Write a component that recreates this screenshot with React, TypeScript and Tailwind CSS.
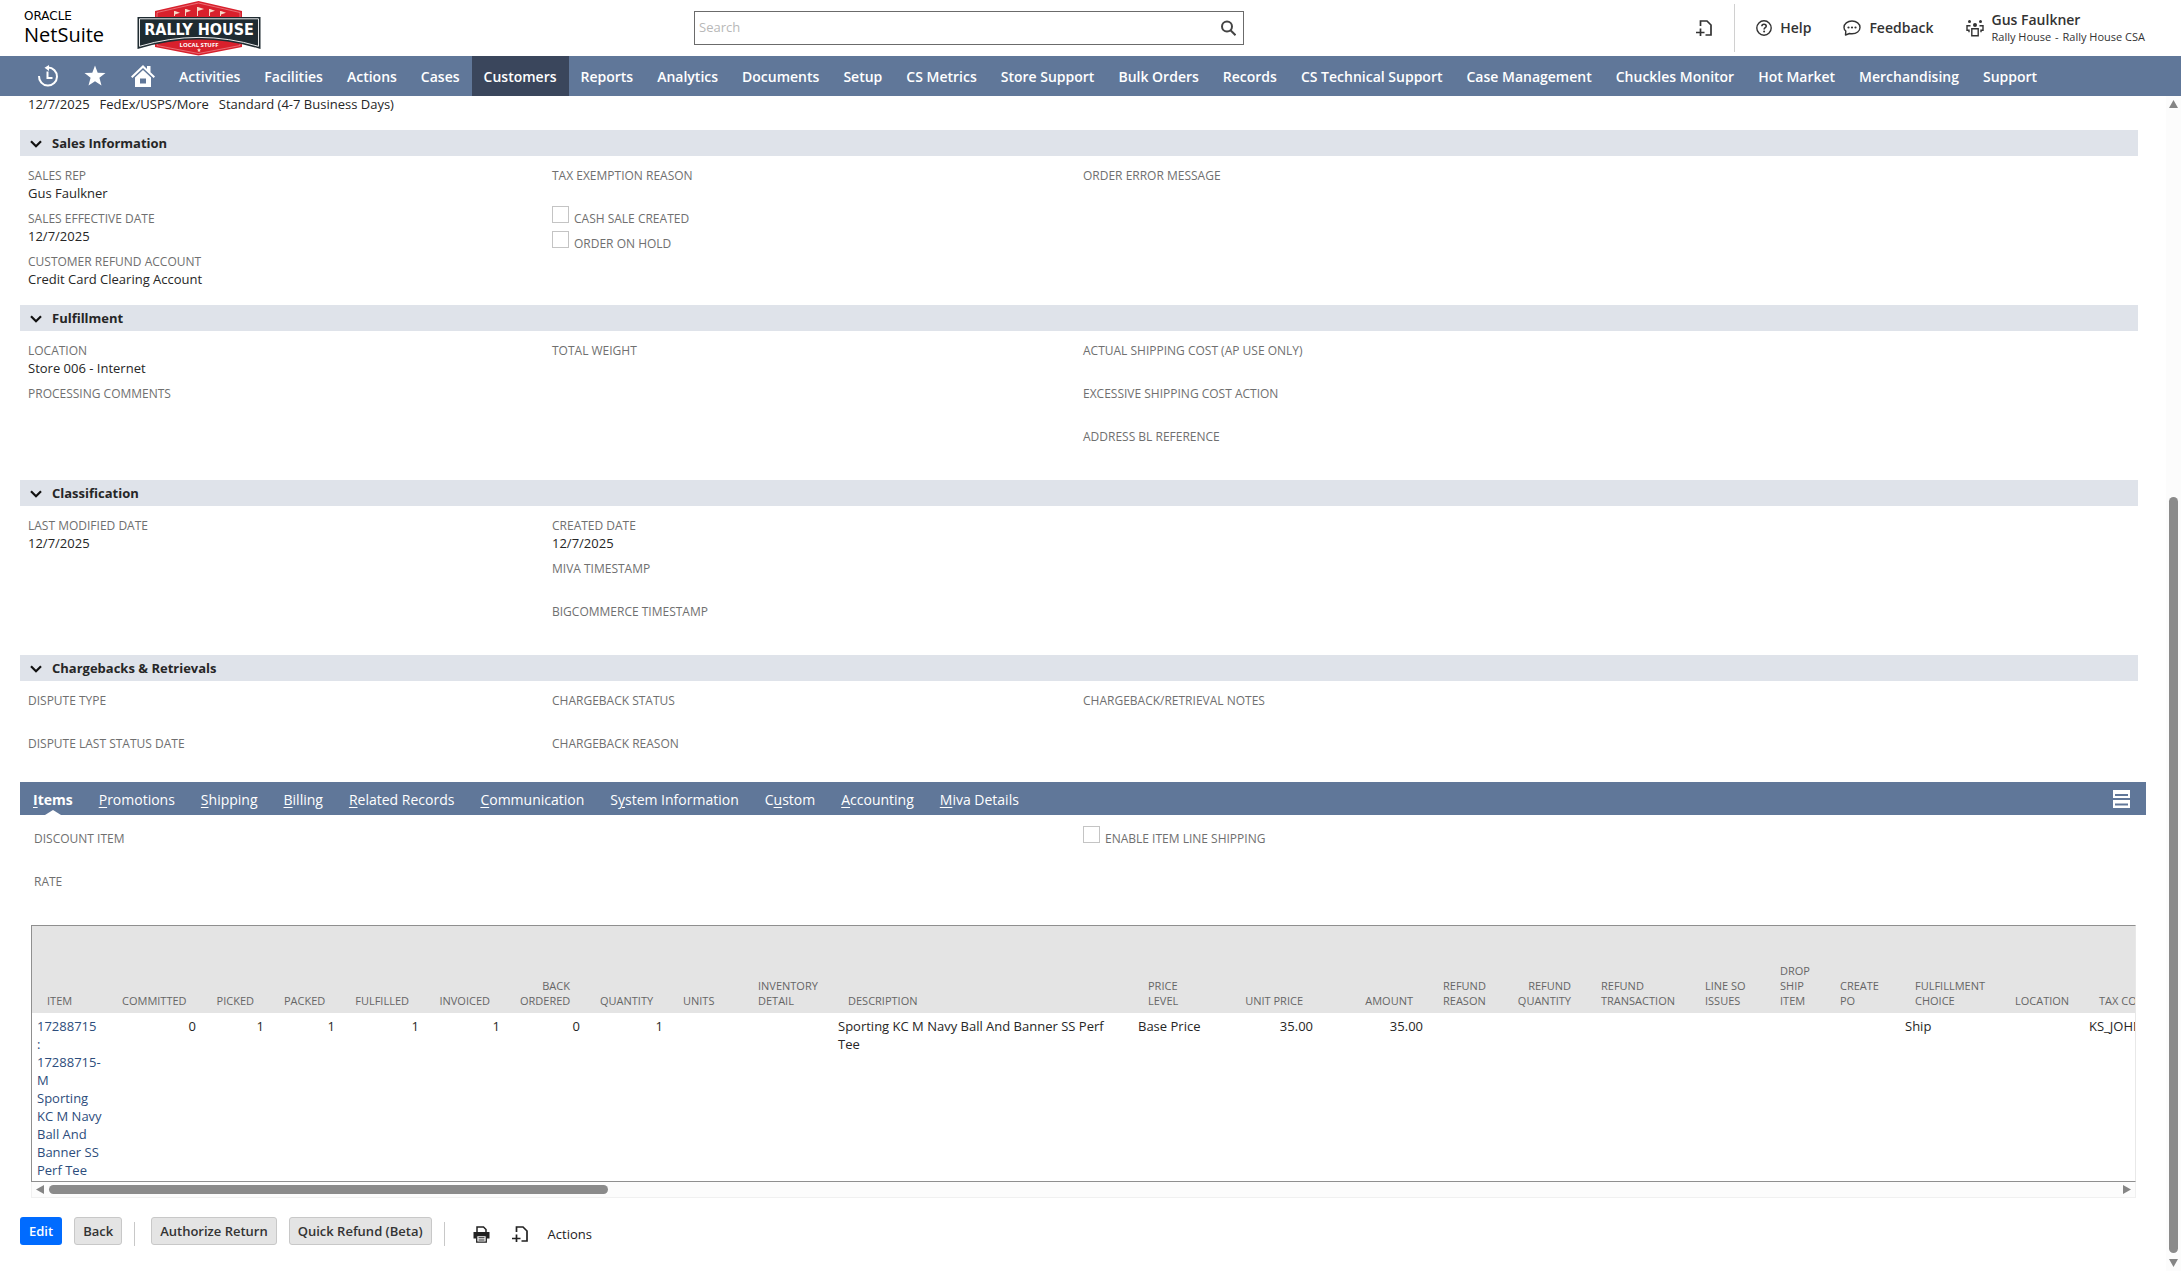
import { useState } from "react";
import type { ReactNode } from "react";

interface FieldData {
  label: string;
  value?: string;
}

interface SectionData {
  title: string;
  columns: FieldData[][];
  checks?: string[];
}

interface Column {
  header: string;
  width: string;
  value?: string;
  right?: boolean;
}

const menu = [
  "Activities",
  "Facilities",
  "Actions",
  "Cases",
  "Customers",
  "Reports",
  "Analytics",
  "Documents",
  "Setup",
  "CS Metrics",
  "Store Support",
  "Bulk Orders",
  "Records",
  "CS Technical Support",
  "Case Management",
  "Chuckles Monitor",
  "Hot Market",
  "Merchandising",
  "Support",
];

const sections: SectionData[] = [
  {
    title: "Sales Information",
    columns: [
      [
        { label: "SALES REP", value: "Gus Faulkner" },
        { label: "SALES EFFECTIVE DATE", value: "12/7/2025" },
        { label: "CUSTOMER REFUND ACCOUNT", value: "Credit Card Clearing Account" },
      ],
      [{ label: "TAX EXEMPTION REASON" }],
      [{ label: "ORDER ERROR MESSAGE" }],
    ],
    checks: ["CASH SALE CREATED", "ORDER ON HOLD"],
  },
  {
    title: "Fulfillment",
    columns: [
      [{ label: "LOCATION", value: "Store 006 - Internet" }, { label: "PROCESSING COMMENTS" }],
      [{ label: "TOTAL WEIGHT" }],
      [
        { label: "ACTUAL SHIPPING COST (AP USE ONLY)" },
        { label: "EXCESSIVE SHIPPING COST ACTION" },
        { label: "ADDRESS BL REFERENCE" },
      ],
    ],
  },
  {
    title: "Classification",
    columns: [
      [{ label: "LAST MODIFIED DATE", value: "12/7/2025" }],
      [
        { label: "CREATED DATE", value: "12/7/2025" },
        { label: "MIVA TIMESTAMP" },
        { label: "BIGCOMMERCE TIMESTAMP" },
      ],
      [],
    ],
  },
  {
    title: "Chargebacks & Retrievals",
    columns: [
      [{ label: "DISPUTE TYPE" }, { label: "DISPUTE LAST STATUS DATE" }],
      [{ label: "CHARGEBACK STATUS" }, { label: "CHARGEBACK REASON" }],
      [{ label: "CHARGEBACK/RETRIEVAL NOTES" }],
    ],
  },
];

// key is the index of the underlined access letter
const tabs = [
  { name: "Items", key: 0 },
  { name: "Promotions", key: 0 },
  { name: "Shipping", key: 0 },
  { name: "Billing", key: 0 },
  { name: "Related Records", key: 0 },
  { name: "Communication", key: 0 },
  { name: "System Information", key: 1 },
  { name: "Custom", key: 1 },
  { name: "Accounting", key: 0 },
  { name: "Miva Details", key: 0 },
];

const columns: Column[] = [
  { header: "COMMITTED", width: "w-[94px]", value: "0", right: true },
  { header: "PICKED", width: "w-[68px]", value: "1", right: true },
  { header: "PACKED", width: "w-[71px]", value: "1", right: true },
  { header: "FULFILLED", width: "w-[84px]", value: "1", right: true },
  { header: "INVOICED", width: "w-[81px]", value: "1", right: true },
  { header: "BACK\nORDERED", width: "w-[80px]", value: "0", right: true },
  { header: "QUANTITY", width: "w-[83px]", value: "1", right: true },
  { header: "UNITS", width: "w-[75px]" },
  { header: "INVENTORY\nDETAIL", width: "w-[90px]" },
  { header: "DESCRIPTION", width: "w-[300px]", value: "Sporting KC M Navy Ball And Banner SS Perf Tee" },
  { header: "PRICE\nLEVEL", width: "w-[97px]", value: "Base Price" },
  { header: "UNIT PRICE", width: "w-[88px]", value: "35.00", right: true },
  { header: "AMOUNT", width: "w-[110px]", value: "35.00", right: true },
  { header: "REFUND\nREASON", width: "w-[74px]" },
  { header: "REFUND\nQUANTITY", width: "w-[84px]", right: true },
  { header: "REFUND\nTRANSACTION", width: "w-[104px]" },
  { header: "LINE SO\nISSUES", width: "w-[75px]" },
  { header: "DROP\nSHIP\nITEM", width: "w-[60px]" },
  { header: "CREATE\nPO", width: "w-[75px]" },
  { header: "FULFILLMENT\nCHOICE", width: "w-[100px]", value: "Ship" },
  { header: "LOCATION", width: "w-[84px]" },
  { header: "TAX CODE", width: "w-[130px]", value: "KS_JOHNSON" },
];

const RallyLogo = () => (
  <svg width="124" height="56" viewBox="0 0 124 56" role="img" aria-label="Rally House">
    <path d="M61.500 1 105 11V47L61.500 55.500 18 47V11Z" fill="#d8202c" />
    <path d="M61.500 3 103 12.500V45.500L61.500 53.500 20 45.500V12.500Z" fill="none" stroke="#f3a0a4" strokeWidth=".6" />
    <g fill="#f7d9c8">
      <path d="M37 11h1v5h-1zM38 11l5 1.800-5 1.800z" />
      <path d="M48 9h1v7h-1zM49 9l5 1.800-5 1.800z" />
      <path d="M60 7h1v9h-1zM61 7l6 2-6 2z" />
      <path d="M72 9h1v7h-1zM73 9l5 1.800-5 1.800z" />
      <path d="M83 11h1v5h-1zM84 11l5 1.800-5 1.800z" />
    </g>
    <path d="M.5 17H123.500V49Q62 30 .5 49Z" fill="#1f2b31" />
    <path d="M2.500 18.800H121.500V46.300Q62 28.500 2.500 46.300Z" fill="none" stroke="#fff" strokeWidth=".9" />
    <text
      x="62"
      y="35"
      textAnchor="middle"
      fill="#fff"
      className="font-['DejaVu_Sans_Condensed','DejaVu_Sans',sans-serif] text-[16px] font-bold"
    >
      RALLY HOUSE
    </text>
    <text
      x="62"
      y="47"
      textAnchor="middle"
      fill="#fff"
      className="font-['Open_Sans',sans-serif] text-[6px] font-bold"
    >
      LOCAL STUFF
    </text>
    <path d="M62 48l.6 1.300 1.400.2-1 1 .2 1.400-1.200-.7-1.200.7.2-1.400-1-1 1.400-.2z" fill="#f7d9c8" />
  </svg>
);

const NewDocIcon = () => (
  <svg width="16" height="16" viewBox="0 0 16 16" fill="none" stroke="currentColor" strokeWidth="1.700">
    <path d="M4.500 6V1H11l4 4v10H9.500" />
    <path d="M4.500 8.500V16M0 12.500h8.500" />
  </svg>
);

const HelpIcon = () => (
  <svg width="16" height="16" viewBox="0 0 16 16" fill="none" stroke="currentColor" strokeWidth="1.400">
    <circle cx="8" cy="8" r="7.200" />
    <path d="M5.900 6.300C5.900 5 6.800 4.300 8 4.300s2.200.8 2.200 1.900C10.200 7.700 8.100 7.700 8.100 9.500" strokeWidth="1.600" />
    <circle cx="8.100" cy="11.500" r="1" fill="currentColor" stroke="none" />
  </svg>
);

const FeedbackIcon = () => (
  <svg width="18" height="16" viewBox="0 0 18 16" fill="none" stroke="currentColor" strokeWidth="1.400">
    <path d="M2.500 15l.3-4C1.600 10 1 8.800 1 7.400 1 3.800 4.500 1 9 1s8 2.800 8 6.400-3.500 6.400-8 6.400c-1 0-1.700-.1-2.500-.3z" strokeLinejoin="round" />
    <g fill="currentColor" stroke="none">
      <circle cx="5.500" cy="7.500" r="1.100" />
      <circle cx="9" cy="7.500" r="1.100" />
      <circle cx="12.500" cy="7.500" r="1.100" />
    </g>
  </svg>
);

const RolesIcon = () => (
  <svg width="18" height="18" viewBox="0 0 18 18" fill="none" stroke="currentColor" strokeWidth="1.400">
    <path d="M5.800 9.700h6.400v7H5.800z" />
    <path d="M4.500 6.700H1v4.500h2v2M13.500 6.700H17v4.500h-2v2" />
    <g fill="currentColor" stroke="none">
      <circle cx="9" cy="6" r="2" />
      <circle cx="3.500" cy="2.500" r="1.500" />
      <circle cx="14.500" cy="2.500" r="1.500" />
    </g>
  </svg>
);

const HistoryIcon = () => (
  <svg width="22" height="22" viewBox="0 0 22 22" fill="none" stroke="currentColor" strokeWidth="2">
    <path d="M2 11a9 9 0 1 0 9-8.500" />
    <path d="M12 0v6L7.500 2.800z" fill="currentColor" stroke="none" />
    <path d="M10.500 6.500v6.500h5" />
  </svg>
);

const StarIcon = () => (
  <svg width="22" height="22" viewBox="0 0 22 22" fill="currentColor">
    <path d="M11 .5l2.700 7.200 7.800.3-6.100 4.800 2.100 7.700L11 16.200l-6.500 4.300 2.100-7.700L.5 8l7.800-.3z" />
  </svg>
);

const HomeIcon = () => (
  <svg width="24" height="22" viewBox="0 0 24 22" fill="currentColor">
    <path d="M12 0l4 3.900V1h3.500v6.300L24 11.600l-1.400 1.400L12 2.900 1.400 13 0 11.600z" />
    <path d="M12 5l8 7.600V22H4v-9.400zM9 13.500v5h6v-5z" fillRule="evenodd" />
  </svg>
);

const PrintIcon = () => (
  <svg width="17" height="17" viewBox="0 0 17 17" fill="none" stroke="currentColor" strokeWidth="1.500">
    <path d="M4 6V1h6.500L13 3.500V6" />
    <path d="M.5 6h16v6.500h-3V9.500h-10v3h-3z" fill="currentColor" stroke="none" />
    <path d="M3.700 9.500h9.600v6.700H3.700z" fill="#fff" strokeWidth="1.300" />
    <path d="M5.500 11.800h6M5.500 14h6" strokeWidth="1.100" />
  </svg>
);

const Field = ({ label, value }: FieldData) => (
  <div className="mt-[7px] h-9">
    <div className="text-xs leading-[18px] text-[#6f6f6f]">{label}</div>
    <div className="leading-4">{value}</div>
  </div>
);

const CheckField = ({ label }: { label: string }) => (
  <label className="flex h-[25px] gap-[5px] text-xs leading-[25px] text-[#6f6f6f]">
    <input type="checkbox" className="size-[17px] appearance-none border border-[#c4c4c4] bg-white" />
    {label}
  </label>
);

const Section = ({ title, columns, checks }: SectionData) => {
  const [open, setOpen] = useState(true);

  return (
    <section className="mr-2">
      <h2>
        <button
          type="button"
          aria-expanded={open}
          onClick={() => setOpen(!open)}
          className="flex h-[26px] w-full items-center gap-2.5 bg-[#dfe3ea] pt-0.5 pl-2.5 text-[13px] font-bold"
        >
          <svg width="12" height="8" viewBox="0 0 12 8" fill="none" stroke="#111" strokeWidth="2.200">
            <path d="M1 1.200l5 5 5-5" />
          </svg>
          {title}
        </button>
      </h2>
      {open && (
        <div className="grid grid-cols-[524fr_531fr_1055fr] pt-1 pl-2">
          {columns.map((fields, i) => (
            <div key={i}>
              {fields.map((field) => (
                <Field key={field.label} {...field} />
              ))}
              {i === 1 && checks && (
                <div className="mt-[3px]">
                  {checks.map((label) => (
                    <CheckField key={label} label={label} />
                  ))}
                </div>
              )}
            </div>
          ))}
        </div>
      )}
    </section>
  );
};

const GreyButton = ({ children }: { children: ReactNode }) => (
  <button
    type="button"
    className="h-7 rounded-[3px] border border-[#c8c8c8] bg-[#e4e4e4] px-2 pt-px text-[13px] font-semibold text-[#333]"
  >
    {children}
  </button>
);

const Header = () => (
  <header className="grid h-14 shrink-0 grid-cols-[694fr_550fr_937fr] items-center">
    <div className="flex items-center pl-6">
      <div className="w-[113px]">
        <div className="font-['DejaVu_Sans',sans-serif] text-xs leading-[14px] text-black">ORACLE</div>
        <div className="text-xl leading-6 text-black">NetSuite</div>
      </div>
      <RallyLogo />
    </div>
    <div className="flex h-[34px] items-center border border-[#6b6b6b] pr-[7px]">
      <input
        type="text"
        aria-label="Search"
        placeholder="Search"
        className="min-w-0 flex-1 px-1 text-[13px] outline-none placeholder:text-[#b8b8b8]"
      />
      <button type="button" aria-label="Run search" className="text-[#444]">
        <svg width="15" height="16" viewBox="0 0 15 16" fill="none" stroke="currentColor" strokeWidth="2">
          <circle cx="6" cy="6.500" r="5" />
          <path d="M9.500 10.200l5 5" />
        </svg>
      </button>
    </div>
    <div className="flex h-full items-center justify-end pr-9 text-sm font-semibold text-[#333]">
      <button type="button" aria-label="Create new" className="mr-[22px]">
        <NewDocIcon />
      </button>
      <div className="mr-[21px] h-12 w-px bg-[#d0d0d0]" />
      <button type="button" className="mr-8 flex items-center gap-2">
        <HelpIcon />
        Help
      </button>
      <button type="button" className="mr-8 flex items-center gap-2">
        <FeedbackIcon />
        Feedback
      </button>
      <button type="button" className="flex items-center gap-2 text-left">
        <RolesIcon />
        <span>
          <span className="block leading-[18px]">Gus Faulkner</span>
          <span className="block text-[11px] leading-4 font-normal">
            Rally House <span className="mx-px">-</span> Rally House CSA
          </span>
        </span>
      </button>
    </div>
  </header>
);

const ItemsTable = () => (
  <div className="mt-4 mr-2.5 ml-[11px]">
    <div className="overflow-hidden border border-[#8f8f8f] border-r-[#e8e8e8]">
      <table className="w-[2182px] table-fixed border-collapse">
        <thead>
          <tr className="h-[87px] bg-[#e4e4e4] align-bottom text-[11px] leading-[15px] text-[#666]">
            <th className="w-[75px] px-[15px] pb-[5px] text-left font-normal">ITEM</th>
            {columns.map((col) => (
              <th
                key={col.header}
                className={`${col.width} px-[15px] pb-[5px] font-normal whitespace-pre ${col.right ? "text-right" : "text-left"}`}
              >
                {col.header}
              </th>
            ))}
          </tr>
        </thead>
        <tbody>
          <tr className="align-top leading-[18px]">
            <td className="px-[5px] pt-1 pb-0.5">
              <a href="#item" className="text-[#2d4d7c]">
                17288715 : 17288715-M Sporting KC M Navy Ball And Banner SS Perf Tee
              </a>
            </td>
            {columns.map((col) => (
              <td key={col.header} className={`px-[5px] pt-1 pb-0.5 ${col.right ? "text-right" : "text-left"}`}>
                {col.value}
              </td>
            ))}
          </tr>
        </tbody>
      </table>
    </div>
    {/* Horizontal scrollbar */}
    <div className="flex h-4 items-center gap-[5px] border border-t-0 border-[#f0f0f0] bg-[#fcfcfc] px-1">
      <svg width="8" height="9" viewBox="0 0 8 9" fill="#858585">
        <path d="M8 0v9L0 4.500z" />
      </svg>
      <div className="flex-1">
        <div className="h-[9px] w-[27%] rounded-full bg-[#8b8b8b]" />
      </div>
      <svg width="8" height="9" viewBox="0 0 8 9" fill="#858585">
        <path d="M0 0v9l8-4.500z" />
      </svg>
    </div>
  </div>
);

const App = () => {
  const [activeTab, setActiveTab] = useState("Items");

  return (
    <div className="flex h-screen flex-col overflow-hidden bg-white font-['Open_Sans',sans-serif] text-[13px] text-[#262626]">
      <Header />

      {/* Main menu */}
      <nav className="flex h-10 shrink-0 items-center bg-[#607799] text-sm font-semibold text-white">
        <div className="flex items-center gap-[25px] pr-3 pl-[37px]">
          <a href="#recent" aria-label="Recent records">
            <HistoryIcon />
          </a>
          <a href="#shortcuts" aria-label="Shortcuts">
            <StarIcon />
          </a>
          <a href="#home" aria-label="Home">
            <HomeIcon />
          </a>
        </div>
        {menu.map((item) => (
          <a
            key={item}
            href="#menu"
            className={`flex h-full items-center px-3 pt-0.5 whitespace-nowrap ${item === "Customers" ? "bg-[#3a465c]" : ""}`}
          >
            {item}
          </a>
        ))}
      </nav>

      <div className="flex min-h-0 flex-1">
        <main className="min-w-0 flex-1 overflow-hidden px-5">
          <div className="mb-4 flex h-[18px] gap-2.5 pl-2 leading-4">
            <span>12/7/2025</span>
            <span>FedEx/USPS/More</span>
            <span>Standard (4-7 Business Days)</span>
          </div>

          <div className="flex flex-col gap-4">
            {sections.map((section) => (
              <Section key={section.title} {...section} />
            ))}
          </div>

          {/* Subtabs */}
          <div role="tablist" className="mt-[11px] flex h-[33px] items-center bg-[#607799] pr-4 text-sm text-white">
            {tabs.map((tab) => (
              <button
                key={tab.name}
                type="button"
                role="tab"
                aria-selected={activeTab === tab.name}
                onClick={() => setActiveTab(tab.name)}
                className={`relative h-full px-[13px] pt-[3px] ${activeTab === tab.name ? "font-bold" : ""}`}
              >
                {tab.name.slice(0, tab.key)}
                <span className="underline underline-offset-2">{tab.name[tab.key]}</span>
                {tab.name.slice(tab.key + 1)}
                {activeTab === tab.name && (
                  <span className="absolute bottom-0 left-1/2 -ml-2 border-x-8 border-b-[5px] border-x-transparent border-b-white" />
                )}
              </button>
            ))}
            <button type="button" aria-label="Expand all tabs" className="ml-auto">
              <svg width="17" height="18" viewBox="0 0 17 18" fill="#fff">
                <path d="M0 0h17v8H0zM2 4v2h13V4zM0 10h17v8H0zM2 13.500v2h13v-2z" fillRule="evenodd" />
              </svg>
            </button>
          </div>

          <div className="grid grid-cols-[1049fr_1063fr] pt-2 pl-3.5">
            <div>
              <Field label="DISCOUNT ITEM" />
              <Field label="RATE" />
            </div>
            <div className="mt-[3px]">
              <CheckField label="ENABLE ITEM LINE SHIPPING" />
            </div>
          </div>

          <ItemsTable />

          {/* Footer actions */}
          <div className="mt-[19px] flex items-start">
            <button type="button" className="mr-3 h-7 rounded-[3px] bg-[#006bff] px-[9px] pt-px font-semibold text-white">
              Edit
            </button>
            <GreyButton>Back</GreyButton>
            <div className="mt-[5px] mr-4 ml-3 h-6 w-px bg-[#c8c8c8]" />
            <GreyButton>Authorize Return</GreyButton>
            <div className="w-3" />
            <GreyButton>Quick Refund (Beta)</GreyButton>
            <div className="mt-[5px] mr-7 ml-3 h-6 w-px bg-[#c8c8c8]" />
            <div className="mt-[5px] flex h-6 items-center text-[#222]">
              <button type="button" aria-label="Print" className="mr-[22px]">
                <PrintIcon />
              </button>
              <button type="button" aria-label="Create new" className="mr-5">
                <NewDocIcon />
              </button>
              <button type="button" className="pt-px font-medium">
                Actions
              </button>
            </div>
          </div>
        </main>

        {/* Page scrollbar */}
        <div className="flex w-[15px] flex-col items-center bg-[#fcfcfc] py-1">
          <svg width="9" height="8" viewBox="0 0 9 8" fill="#858585" className="shrink-0">
            <path d="M0 8h9L4.500 0z" />
          </svg>
          <div className="grow-[34]" />
          <div className="w-[9px] grow-[66] rounded-full bg-[#8b8b8b]" />
          <svg width="9" height="8" viewBox="0 0 9 8" fill="#858585" className="mt-1.5 shrink-0">
            <path d="M0 0h9L4.500 8z" />
          </svg>
        </div>
      </div>
    </div>
  );
};

export default App;
